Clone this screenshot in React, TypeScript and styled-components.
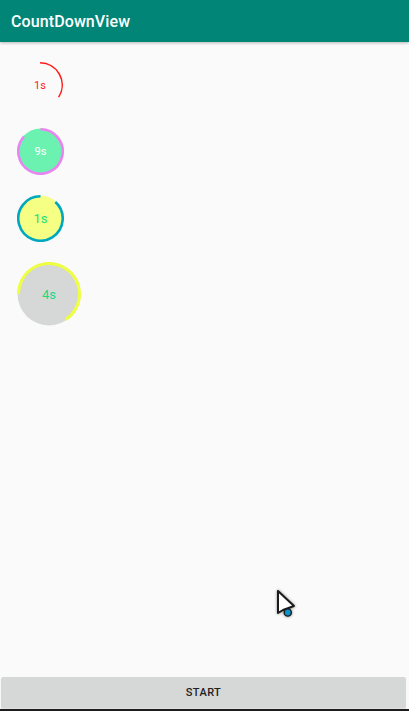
import React from "react";
import styled, { createGlobalStyle } from "styled-components";

const GlobalStyle = createGlobalStyle`
  html, body { margin: 0; padding: 0; background: #fafafa; }
  body { font-family: Roboto, "Noto Sans", "Liberation Sans", sans-serif; }
  * { box-sizing: border-box; }
`;

const Screen = styled.div`
  position: relative;
  width: 409px;
  height: 711px;
  display: flex;
  flex-direction: column;
  background: #fafafa;
  overflow: hidden;
`;

const AppBar = styled.header`
  height: 42px;
  flex: none;
  background: #008577;
  display: flex;
  align-items: center;
  padding-left: 11px;
  box-shadow: 0 1px 3px rgba(0, 0, 0, 0.28);
  position: relative;
  z-index: 1;
`;

const Title = styled.h1`
  margin: 0;
  color: #ffffff;
  font-size: 16px;
  font-weight: 500;
  letter-spacing: 0.1px;
`;

const Content = styled.main`
  flex: 1;
  display: flex;
  flex-direction: column;
  align-items: flex-start;
  gap: 20px;
  padding: 20px 0 0 17px;
`;

const RingBox = styled.div<{ $size: number }>`
  position: relative;
  width: ${(p) => p.$size}px;
  height: ${(p) => p.$size}px;
  display: flex;
  align-items: center;
  justify-content: center;
`;

const RingArt = styled.svg`
  position: absolute;
  inset: 0;
`;

const Label = styled.span<{ $color: string; $fs: number }>`
  position: relative;
  color: ${(p) => p.$color};
  font-size: ${(p) => p.$fs}px;
  line-height: 1;
`;

const StartButton = styled.button`
  flex: none;
  height: 31px;
  margin: 0 3px 1px 1px;
  border: none;
  border-radius: 2px;
  background: #d6d7d7;
  box-shadow: 0 2px 1px rgba(0, 0, 0, 0.1);
  font-family: Roboto, "Noto Sans", "Liberation Sans", sans-serif;
  font-size: 11px;
  font-weight: 500;
  letter-spacing: 0.4px;
  color: #222;
  padding: 0;
`;

const BottomEdge = styled.div`
  flex: none;
  height: 2px;
  background: #1d1d1d;
`;

const Cursor = styled.svg`
  position: absolute;
  left: 272px;
  top: 586px;
  filter: drop-shadow(0 0 1.5px rgba(0, 0, 0, 0.45));
`;

function arcPath(cx: number, cy: number, r: number, start: number, sweep: number) {
  const toXY = (deg: number) => {
    const a = ((deg - 90) * Math.PI) / 180;
    return [cx + r * Math.cos(a), cy + r * Math.sin(a)];
  };
  const [x0, y0] = toXY(start);
  const [x1, y1] = toXY(start + sweep);
  const large = sweep > 180 ? 1 : 0;
  return `M ${x0.toFixed(2)} ${y0.toFixed(2)} A ${r} ${r} 0 ${large} 1 ${x1.toFixed(2)} ${y1.toFixed(2)}`;
}

type RingProps = {
  size: number;
  fill?: string;
  stroke: string;
  width: number;
  start: number;
  sweep: number;
  text: string;
  textColor: string;
  fontSize: number;
};

function Ring({ size, fill, stroke, width, start, sweep, text, textColor, fontSize }: RingProps) {
  const c = size / 2;
  const r = c - width / 2;
  return (
    <RingBox $size={size}>
      <RingArt width={size} height={size} viewBox={`0 0 ${size} ${size}`}>
        {fill && <circle cx={c} cy={c} r={c - 0.5} fill={fill} />}
        <path d={arcPath(c, c, r, start, sweep)} fill="none" stroke={stroke} strokeWidth={width} />
      </RingArt>
      <Label $color={textColor} $fs={fontSize}>
        {text}
      </Label>
    </RingBox>
  );
}

const rings: RingProps[] = [
  { size: 46, stroke: "#ff1a1a", width: 1.6, start: 0, sweep: 123, text: "1s", textColor: "#ff2020", fontSize: 11 },
  { size: 47, fill: "#6cf2b0", stroke: "#ea84f2", width: 2.6, start: 0, sweep: 312, text: "9s", textColor: "#ffffff", fontSize: 11 },
  { size: 47, fill: "#f4ff84", stroke: "#00a8bf", width: 2.6, start: 42, sweep: 318, text: "1s", textColor: "#1ee07a", fontSize: 13 },
  { size: 64, fill: "#d6d7d7", stroke: "#eeff41", width: 3, start: 270, sweep: 237, text: "4s", textColor: "#1ed884", fontSize: 13 },
];

export default function App() {
  return (
    <>
      <GlobalStyle />
      <Screen>
        <AppBar>
          <Title>CountDownView</Title>
        </AppBar>
        <Content>
          {rings.map((r, i) => (
            <Ring key={i} {...r} />
          ))}
        </Content>
        <StartButton>START</StartButton>
        <BottomEdge />
        <Cursor width="30" height="34" viewBox="0 0 30 34">
          <path d="M6 5 L6 27 L11 24 L22 20 Z" fill="#ffffff" stroke="#1a1a1a" strokeWidth="2" strokeLinejoin="round" />
          <circle cx="15.8" cy="26.5" r="3.6" fill="#0a93c8" stroke="#1a1a1a" strokeWidth="1.4" />
        </Cursor>
      </Screen>
    </>
  );
}
